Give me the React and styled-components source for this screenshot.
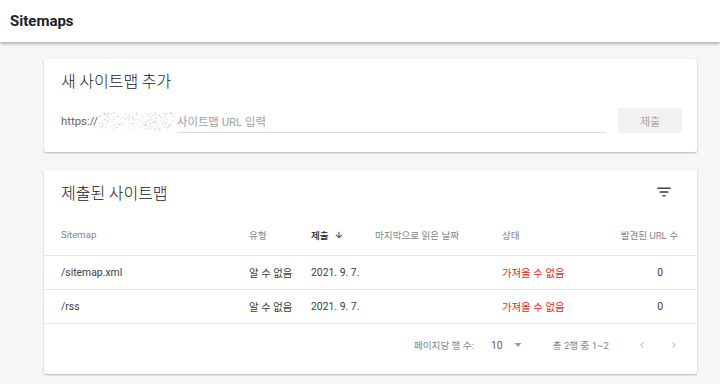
import { useMemo } from "react";
import styled, { createGlobalStyle } from "styled-components";

const GlobalStyle = createGlobalStyle`
  html, body {
    margin: 0;
    padding: 0;
    background: #f6f6f6;
    font-family: Roboto, "Noto Sans CJK KR", sans-serif;
    color: #202124;
  }
  * { box-sizing: border-box; }
`;

const Page = styled.div`
  width: 720px;
  height: 384px;
  overflow: hidden;
  background: #f6f6f6;
`;

const TopBar = styled.header`
  height: 42px;
  background: #fff;
  display: flex;
  align-items: center;
  padding-left: 10px;
  box-shadow: 0 2px 3px rgba(0, 0, 0, 0.28);
  position: relative;
  z-index: 1;
`;

const TopTitle = styled.h1`
  margin: 0;
  font-size: 15px;
  font-weight: 700;
  color: #202124;
`;

const Content = styled.main`
  display: flex;
  flex-direction: column;
  gap: 18px;
  padding: 17px 23px 0 44px;
`;

const Card = styled.section`
  background: #fff;
  border-radius: 2px;
  box-shadow: 0 1px 2px rgba(0, 0, 0, 0.25), 0 0 1px rgba(0, 0, 0, 0.08);
`;

const CardTitle = styled.div`
  height: ${(p) => p.$h || 42}px;
  display: flex;
  align-items: center;
  justify-content: space-between;
  padding: 0 24px 0 17px;
  font-family: "Noto Sans CJK KR", sans-serif;
  font-size: 16px;
  font-weight: 300;
  color: #202124;
`;

const InputRow = styled.div`
  display: flex;
  align-items: center;
  padding: 7px 15px 19px 17px;
  gap: 12px;
`;

const Field = styled.div`
  flex: 1;
  display: flex;
  align-items: center;
  height: 24px;
  font-size: 11.4px;
`;

const Prefix = styled.span`
  color: #5f6368;
  font-family: Roboto, sans-serif;
`;

const Placeholder = styled.span`
  flex: 1;
  align-self: stretch;
  display: flex;
  align-items: center;
  margin-left: 1px;
  padding-top: 2px;
  color: #9aa0a6;
  border-bottom: 1px solid #dadce0;
`;

const SubmitButton = styled.button`
  width: 64px;
  height: 25px;
  border: none;
  border-radius: 2px;
  background: #f1f1f1;
  color: #a8a8a8;
  font-family: "Noto Sans CJK KR", sans-serif;
  font-size: 11px;
`;

const IconButton = styled.span`
  display: flex;
  align-items: center;
  color: #5f6368;
`;

const Grid = styled.div`
  display: grid;
  grid-template-columns: 188px 62px 64px 127px 80px 1fr;
  align-items: center;
  height: ${(p) => p.$h}px;
  padding: 0 19px 0 17px;
  border-bottom: 1px solid #e6e6e6;
`;

const HeadCell = styled.div`
  font-size: 9.6px;
  color: ${(p) => (p.$active ? "#202124" : "#80868b")};
  font-weight: ${(p) => (p.$active ? 500 : 400)};
  display: flex;
  align-items: center;
  justify-content: ${(p) => (p.$right ? "flex-end" : "flex-start")};
  gap: 5px;
`;

const Cell = styled.div`
  font-size: 10.4px;
  color: ${(p) => (p.$error ? "#d93025" : "#3c4043")};
  text-align: ${(p) => (p.$right ? "right" : "left")};
  padding-right: ${(p) => (p.$right ? 15 : 0)}px;
`;

const Footer = styled.div`
  height: 50px;
  padding: 0 17px 8px 0;
  display: flex;
  align-items: center;
  justify-content: flex-end;
  font-size: 9.6px;
  color: #80868b;
`;

const FooterLabel = styled.span`
  margin-right: ${(p) => p.$mr}px;
`;

const PerPage = styled.span`
  display: flex;
  align-items: center;
  gap: 10px;
  color: #5f6368;
  margin-right: 30px;
  font-size: 10.4px;
`;

const Pager = styled.span`
  display: flex;
  align-items: center;
  gap: 20px;
  margin-left: 27px;
`;

function Noise() {
  const dots = useMemo(() => {
    let s = 7;
    const rnd = () => {
      s = (s * 16807) % 2147483647;
      return s / 2147483647;
    };
    const out = [];
    for (let i = 0; i < 260; i++) {
      const x = rnd() * 76;
      const y = 3 + rnd() * 18;
      const g = Math.floor(150 + rnd() * 95);
      out.push({ x, y, c: `rgb(${g},${g},${g})`, o: 0.35 + rnd() * 0.5 });
    }
    return out;
  }, []);
  return (
    <svg width="78" height="24" viewBox="0 0 78 24">
      {dots.map((d, i) => (
        <rect key={i} x={d.x} y={d.y} width="1" height="1" fill={d.c} opacity={d.o} />
      ))}
    </svg>
  );
}

const FilterIcon = () => (
  <svg width="18" height="18" viewBox="0 0 24 24">
    <path d="M3 6h18v2H3zM6 11h12v2H6zM10 16h4v2h-4z" fill="#3c4043" />
  </svg>
);

const ArrowDown = () => (
  <svg width="10" height="10" viewBox="0 0 24 24">
    <path d="M20 12l-1.41-1.41L13 16.17V4h-2v12.17l-5.58-5.59L4 12l8 8 8-8z" fill="#202124" />
  </svg>
);

const Caret = () => (
  <svg width="10" height="10" viewBox="0 0 10 10">
    <path d="M1.5 3h7L5 7z" fill="#9aa0a6" />
  </svg>
);

const Chevron = ({ dir }) => (
  <svg width="12" height="12" viewBox="0 0 24 24">
    <path
      d={dir === "left" ? "M15.4 7.4L14 6l-6 6 6 6 1.4-1.4L10.8 12z" : "M8.6 16.6L10 18l6-6-6-6-1.4 1.4 4.6 4.6z"}
      fill="#bdc1c6"
    />
  </svg>
);

const rows = [
  { path: "/sitemap.xml", type: "알 수 없음", date: "2021. 9. 7.", status: "가져올 수 없음", urls: 0 },
  { path: "/rss", type: "알 수 없음", date: "2021. 9. 7.", status: "가져올 수 없음", urls: 0 },
];

export default function App() {
  return (
    <Page>
      <GlobalStyle />
      <TopBar>
        <TopTitle>Sitemaps</TopTitle>
      </TopBar>
      <Content>
        <Card>
          <CardTitle $h={42}>새 사이트맵 추가</CardTitle>
          <InputRow>
            <Field>
              <Prefix>https://</Prefix>
              <Noise />
              <Placeholder>사이트맵 URL 입력</Placeholder>
            </Field>
            <SubmitButton>제출</SubmitButton>
          </InputRow>
        </Card>

        <Card>
          <CardTitle $h={44}>
            제출된 사이트맵
            <IconButton>
              <FilterIcon />
            </IconButton>
          </CardTitle>
          <Grid $h={42}>
            <HeadCell>Sitemap</HeadCell>
            <HeadCell>유형</HeadCell>
            <HeadCell $active>
              제출 <ArrowDown />
            </HeadCell>
            <HeadCell>마지막으로 읽은 날짜</HeadCell>
            <HeadCell>상태</HeadCell>
            <HeadCell $right>발견된 URL 수</HeadCell>
          </Grid>
          {rows.map((r) => (
            <Grid $h={34} key={r.path}>
              <Cell>{r.path}</Cell>
              <Cell>{r.type}</Cell>
              <Cell>{r.date}</Cell>
              <Cell />
              <Cell $error>{r.status}</Cell>
              <Cell $right>{r.urls}</Cell>
            </Grid>
          ))}
          <Footer>
            <FooterLabel $mr={17}>페이지당 행 수:</FooterLabel>
            <PerPage>
              10 <Caret />
            </PerPage>
            <FooterLabel $mr={0}>총 2행 중 1~2</FooterLabel>
            <Pager>
              <Chevron dir="left" />
              <Chevron dir="right" />
            </Pager>
          </Footer>
        </Card>
      </Content>
    </Page>
  );
}
